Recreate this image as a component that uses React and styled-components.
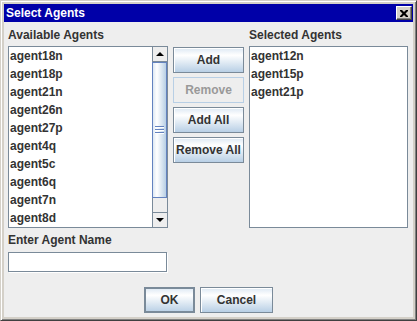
import React from "react";
import styled, { createGlobalStyle } from "styled-components";

const GlobalStyle = createGlobalStyle`
  html, body { margin: 0; padding: 0; background: #d4d0c8; }
  * { box-sizing: border-box; }
`;

const available = [
  "agent18n", "agent18p", "agent21n", "agent26n", "agent27p",
  "agent4q", "agent5c", "agent6q", "agent7n", "agent8d",
];
const selected = ["agent12n", "agent15p", "agent21p"];

const Frame = styled.div`
  width: 417px;
  height: 321px;
  display: flex;
  flex-direction: column;
  background: #d4d0c8;
  border-top: 1px solid #d4d0c8;
  border-left: 1px solid #d4d0c8;
  border-right: 1px solid #404040;
  border-bottom: 1px solid #404040;
  box-shadow: inset 1px 1px 0 #ffffff, inset -1px -1px 0 #808080;
  padding: 3px;
  font-family: "Liberation Sans", Arial, sans-serif;
`;

const TitleBar = styled.div`
  height: 18px;
  flex: none;
  background: #0000a8;
  display: flex;
  align-items: center;
  justify-content: space-between;
  padding: 0 1px 0 2px;
  color: #fff;
  font-weight: bold;
  font-size: 12px;
`;

const CloseBox = styled.div`
  width: 16px;
  height: 14px;
  background: #d4d0c8;
  border-top: 1px solid #ffffff;
  border-left: 1px solid #ffffff;
  border-right: 1px solid #404040;
  border-bottom: 1px solid #404040;
  box-shadow: inset -1px -1px 0 #808080;
  display: flex;
  align-items: center;
  justify-content: center;
`;

const Body = styled.div`
  flex: 1;
  background: #eeeeee;
  padding: 6px 5px 4px 4px;
  display: flex;
  flex-direction: column;
  color: #333333;
  font-size: 12px;
  font-weight: bold;
`;

const TopGrid = styled.div`
  display: grid;
  grid-template-columns: 160px 71px 159px;
  grid-template-rows: 15px 182px;
  column-gap: 5px;
  row-gap: 3px;
`;

const Label = styled.div`
  height: 15px;
  line-height: 15px;
  white-space: nowrap;
`;

const ListBox = styled.div`
  grid-row: 2;
  border: 1px solid #7a8a99;
  background: #ffffff;
  display: flex;
  overflow: hidden;
`;

const Items = styled.div`
  flex: 1;
  padding-left: 1px;
`;

const Item = styled.div`
  height: 18px;
  line-height: 18px;
  white-space: nowrap;
`;

const ScrollBar = styled.div`
  width: 15px;
  display: flex;
  flex-direction: column;
  background: #eeeeee;
  border-left: 1px solid #7a8a99;
`;

const ArrowButton = styled.div`
  height: 15px;
  flex: none;
  background: #eeeeee;
  display: flex;
  align-items: center;
  justify-content: center;
  border-top: ${(p) => (p.$down ? "1px solid #7a8a99" : "none")};
  border-bottom: ${(p) => (p.$down ? "none" : "1px solid #7a8a99")};
  &::after {
    content: "";
    width: 0;
    height: 0;
    border-left: 4px solid transparent;
    border-right: 4px solid transparent;
    ${(p) => (p.$down ? "border-top: 4px solid #000;" : "border-bottom: 4px solid #000;")}
  }
`;

const Thumb = styled.div`
  height: 136px;
  flex: none;
  border: 1px solid #6382bf;
  margin-left: -1px;
  background: linear-gradient(to right, #dde8f3 0%, #ffffff 30%, #b8cfe5 100%);
  display: flex;
  flex-direction: column;
  align-items: center;
  justify-content: center;
  gap: 1px;
`;

const Grip = styled.div`
  width: 9px;
  height: 1px;
  background: #6382bf;
  box-shadow: 0 1px 0 #ffffff;
  margin-bottom: 1px;
`;

const Track = styled.div`
  flex: 1;
`;

const ButtonColumn = styled.div`
  grid-row: 2;
  grid-column: 2;
  padding-top: 1px;
  display: flex;
  flex-direction: column;
  gap: 4px;
`;

const Button = styled.div`
  height: 26px;
  width: ${(p) => p.$w || "100%"};
  flex: none;
  display: flex;
  align-items: center;
  justify-content: center;
  white-space: nowrap;
  font-weight: bold;
  font-size: 12px;
  color: ${(p) => (p.$disabled ? "#999999" : "#333333")};
  border: 1px solid ${(p) => (p.$disabled ? "#b8cfe5" : "#7a8a99")};
  background: ${(p) =>
    p.$disabled
      ? "#eeeeee"
      : "linear-gradient(to bottom, #dde8f3 0%, #ffffff 30%, #b8cfe5 100%)"};
  box-shadow: ${(p) =>
    p.$default ? "inset 0 0 0 1px #7a8a99" : p.$disabled ? "none" : "inset 1px 1px 0 #ffffff"};
`;

const NameSection = styled.div`
  margin-top: 5px;
  display: flex;
  flex-direction: column;
  gap: 4px;
`;

const TextField = styled.div`
  width: 159px;
  height: 20px;
  background: #ffffff;
  border: 1px solid #7a8a99;
  box-shadow: 1px 1px 0 #ffffff;
`;

const ButtonRow = styled.div`
  margin-top: 15px;
  display: flex;
  justify-content: center;
  gap: 5px;
  padding-left: 1px;
`;

function CloseIcon() {
  return (
    <svg width="8" height="7" viewBox="0 0 8 7">
      <path d="M0 0h2l2 2 2-2h2v1L5.5 3.5 8 6v1H6L4 5 2 7H0V6l2.5-2.5L0 1z" fill="#000" />
    </svg>
  );
}

export default function App() {
  return (
    <>
      <GlobalStyle />
      <Frame>
        <TitleBar>
          <span>Select Agents</span>
          <CloseBox>
            <CloseIcon />
          </CloseBox>
        </TitleBar>
        <Body>
          <TopGrid>
            <Label>Available Agents</Label>
            <div />
            <Label>Selected Agents</Label>
            <ListBox>
              <Items>
                {available.map((a) => (
                  <Item key={a}>{a}</Item>
                ))}
              </Items>
              <ScrollBar>
                <ArrowButton />
                <Thumb>
                  <Grip />
                  <Grip />
                  <Grip />
                </Thumb>
                <Track />
                <ArrowButton $down />
              </ScrollBar>
            </ListBox>
            <ButtonColumn>
              <Button>Add</Button>
              <Button $disabled>Remove</Button>
              <Button>Add All</Button>
              <Button>Remove All</Button>
            </ButtonColumn>
            <ListBox>
              <Items>
                {selected.map((a) => (
                  <Item key={a}>{a}</Item>
                ))}
              </Items>
            </ListBox>
          </TopGrid>
          <NameSection>
            <Label>Enter Agent Name</Label>
            <TextField />
          </NameSection>
          <ButtonRow>
            <Button $w="51px" $default>OK</Button>
            <Button $w="73px">Cancel</Button>
          </ButtonRow>
        </Body>
      </Frame>
    </>
  );
}
